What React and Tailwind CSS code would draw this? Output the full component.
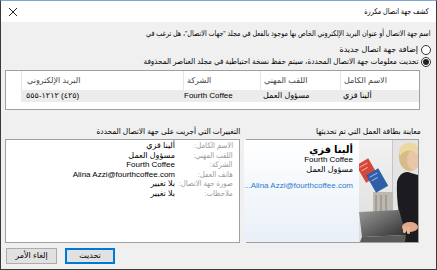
import React from 'react'

const font = "font-['Liberation_Sans','DejaVu_Sans',sans-serif]"

function Photo() {
  return (
    <svg width="59" height="102" viewBox="0 0 59 102" className="block shrink-0">
      <defs>
        <linearGradient id="lap" x1="0" y1="0" x2="1" y2="1">
          <stop offset="0" stopColor="#9a9a9a" />
          <stop offset="1" stopColor="#2e2e2e" />
        </linearGradient>
        <linearGradient id="wall" x1="0" y1="0" x2="0" y2="1">
          <stop offset="0" stopColor="#f2f2f2" />
          <stop offset="1" stopColor="#dcdcdc" />
        </linearGradient>
      </defs>
      <rect width="59" height="102" fill="url(#wall)" />
      <rect x="33" y="0" width="26" height="102" fill="#e4e4e4" />
      <rect x="33" y="0" width="1" height="102" fill="#c6c6c6" />
      <rect x="14" y="52" width="20" height="26" fill="#bdb8b0" />
      <rect x="16" y="55" width="2" height="21" fill="#a29d95" />
      <rect x="21" y="55" width="2" height="21" fill="#a29d95" />
      <rect x="26" y="55" width="2" height="21" fill="#a29d95" />
      <g transform="rotate(-30 9 30)">
        <rect x="1" y="20" width="14" height="20" fill="#d5473a" />
        <rect x="3" y="23" width="9" height="1" fill="#f3b4ab" />
        <rect x="3" y="27" width="7" height="1" fill="#f3b4ab" />
      </g>
      <g transform="rotate(-30 19 40)">
        <rect x="11" y="30" width="14" height="20" fill="#2f5fa9" />
        <rect x="13" y="33" width="9" height="1" fill="#abc1e8" />
        <rect x="13" y="37" width="7" height="1" fill="#abc1e8" />
      </g>
      <path d="M38 42 C40 33 47 30 52 33 L59 35 L59 102 L46 102 C41 82 37 62 38 42 Z" fill="#1c1c20" />
      <ellipse cx="51" cy="17" rx="11" ry="14" fill="#d6bc86" />
      <ellipse cx="54" cy="20" rx="6" ry="10" fill="#e9c6a8" />
      <path d="M40 10 C44 1 56 1 59 7 L59 15 C54 9 46 9 41 16 Z" fill="#ecd8a3" />
      <path d="M0 72 L40 70 L47 95 L3 97 Z" fill="url(#lap)" />
      <path d="M3 97 L47 95 L46 102 L1 102 Z" fill="#5a5a5a" />
      <ellipse cx="51" cy="87" rx="8" ry="5" fill="#e0a98c" />
      <rect x="44" y="86" width="3" height="7" rx="1.5" fill="#e8b599" />
      <rect x="48" y="87" width="3" height="7" rx="1.5" fill="#e8b599" />
    </svg>
  )
}

function Radio({ checked }) {
  return (
    <span className="w-[10px] h-[10px] rounded-full border border-[#333] bg-white flex items-center justify-center shrink-0">
      {checked && <span className="w-[6px] h-[6px] rounded-full bg-[#222]" />}
    </span>
  )
}

export default function App() {
  const changes = [
    ['الاسم الكامل:', 'ألينا قزي'],
    ['اللقب المهني:', 'مسؤول العمل'],
    ['الشركة:', 'Fourth Coffee'],
    ['هاتف العمل:', 'Alina Azzi@fourthcoffee.com'],
    ['صورة جهة الاتصال:', 'بلا تغيير'],
    ['ملاحظات:', 'بلا تغيير'],
  ]

  return (
    <div
      dir="rtl"
      className={`${font} w-[437px] h-[270px] flex flex-col border border-[#3a3a3a] border-t-[#7fa7d4] bg-[#f0f0f0] text-[8px] text-black overflow-hidden`}
    >
      {/* شريط العنوان */}
      <div className="h-[21px] bg-white flex items-center justify-between px-[7px] shrink-0">
        <span className="inline-block origin-right scale-x-[0.81] whitespace-nowrap">كشف جهة اتصال مكررة</span>
        <svg width="10" height="10" viewBox="0 0 10 10">
          <path d="M1 1 L9 9 M9 1 L1 9" stroke="#222" strokeWidth="1" />
        </svg>
      </div>

      <div className="flex-1 flex flex-col pr-[5px] pl-[4px] pt-[6px]">
        <div className="leading-[12px] whitespace-nowrap">
          <span className="inline-block origin-right scale-x-[0.8]">
            اسم جهة الاتصال أو عنوان البريد الإلكتروني الخاص بها موجود بالفعل في مجلد "جهات الاتصال"، هل ترغب في
          </span>
        </div>

        <div className="mt-[5px] flex flex-col gap-[2px]">
          <div className="flex items-center gap-[3px] h-[10px]">
            <Radio />
            <span className="whitespace-nowrap">إضافة جهة اتصال جديدة</span>
          </div>
          <div className="flex items-center gap-[3px] h-[10px]">
            <Radio checked />
            <span className="inline-block origin-right scale-x-[0.9] whitespace-nowrap">
              تحديث معلومات جهة الاتصال المحددة، سيتم حفظ نسخة احتياطية في مجلد العناصر المحذوفة
            </span>
          </div>
        </div>

        {/* قائمة جهات الاتصال */}
        <div className="mt-[3px] mr-[11px] h-[40px] bg-white border border-[#a0a0a0] shrink-0">
          <div className="grid grid-cols-[79px_80px_77px_162px_1fr] h-[19px] text-[#444]">
            <div className="border-l border-[#e5e5e5] flex items-center pl-[3px] justify-end">الاسم الكامل</div>
            <div className="border-l border-[#e5e5e5] flex items-center pl-[3px] justify-end">اللقب المهني</div>
            <div className="border-l border-[#e5e5e5] flex items-center pl-[3px] justify-end">الشركة</div>
            <div className="border-l border-[#e5e5e5] flex items-center pl-[5px] justify-end">البريد الإلكتروني</div>
            <div />
          </div>
          <div className="grid grid-cols-[79px_80px_77px_162px_1fr] h-[11px] items-center">
            <div className="bg-[#ececec] h-full flex items-center justify-end pl-[3px]">ألينا قزي</div>
            <div className="bg-[#ececec] h-full flex items-center justify-end pl-[3px]">مسؤول العمل</div>
            <div className="bg-[#ececec] h-full flex items-center justify-end pl-[1px]">Fourth Coffee</div>
            <div className="bg-[#ececec] h-full flex items-center justify-end pl-[5px]">
              <bdo dir="ltr">٥٥٥-١٢١٢ (٤٢٥)</bdo>
            </div>
            <div />
          </div>
        </div>

        {/* المعاينة والتغييرات */}
        <div className="mt-[17px] mr-[12px] flex gap-[6px]">
          <div className="w-[173px] flex flex-col">
            <div className="h-[10px] leading-[10px] -mr-[2px] whitespace-nowrap">
              <span className="inline-block origin-right scale-x-[0.93]">معاينة بطاقة العمل التي تم تحديثها</span>
            </div>
            <div className="mt-[2px] h-[104px] border border-[#a0a0a0] flex bg-white">
              <Photo />
              <div className="flex-1 h-full bg-gradient-to-b from-white to-[#e9f0f7] flex flex-col pr-[6px] pt-[4px] whitespace-nowrap">
                <div className="text-[10px] font-bold leading-[11px]">ألينا قزي</div>
                <div className="leading-[10px]">Fourth Coffee</div>
                <div className="leading-[10px]">مسؤول العمل</div>
                <div className="mt-[6px] leading-[10px] text-[#2a7bd0]">
                  <span dir="ltr">...Alina Azzi@fourthcoffee.com</span>
                </div>
              </div>
            </div>
          </div>

          <div className="w-[235px] flex flex-col">
            <div className="h-[10px] leading-[10px] whitespace-nowrap">
              <span className="inline-block origin-right scale-x-[0.92]">التغييرات التي أجريت على جهة الاتصال المحددة</span>
            </div>
            <div className="mt-[2px] h-[104px] border border-[#a0a0a0] bg-white pt-[1px] pr-[6px]">
              {changes.map(([label, value]) => (
                <div key={label} className="flex h-[9.5px] leading-[9.5px] whitespace-nowrap">
                  <div className="w-[58px] shrink-0 text-[#9a9a9a]">
                    <span className="inline-block origin-right scale-x-[0.86]">{label}</span>
                  </div>
                  <div>{value}</div>
                </div>
              ))}
            </div>
          </div>
        </div>

        {/* الأزرار */}
        <div className="mt-auto mb-[5px] flex justify-end gap-[8px] pl-[1px]">
          <button className="w-[50px] h-[16px] bg-[#e1e1e1] border-2 border-[#0078d7] text-[8px] leading-none">
            تحديث
          </button>
          <button className="w-[51px] h-[16px] bg-[#e1e1e1] border border-[#adadad] text-[8px] leading-none">
            إلغاء الأمر
          </button>
        </div>
      </div>
    </div>
  )
}
